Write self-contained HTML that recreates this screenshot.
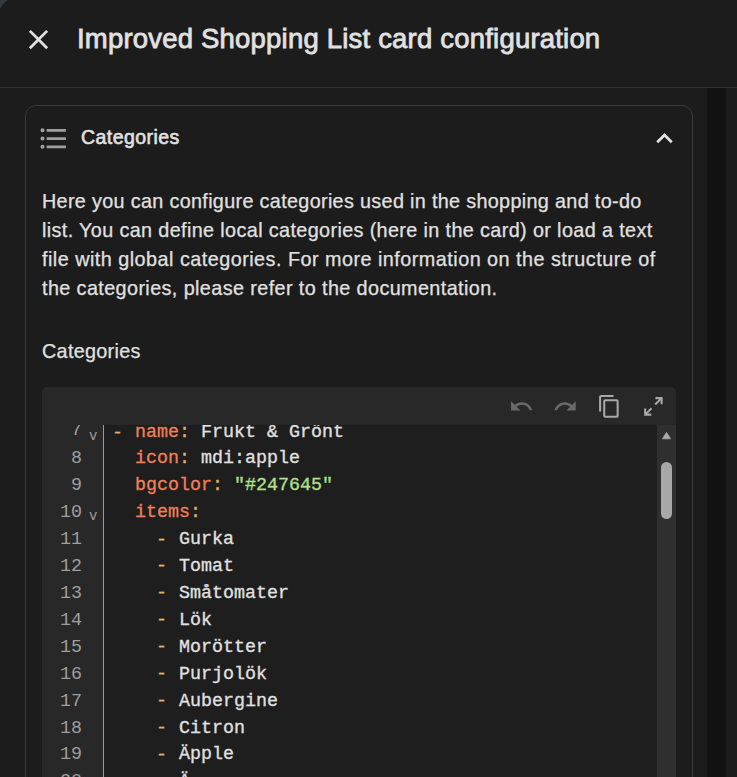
<!DOCTYPE html>
<html><head><meta charset="utf-8">
<style>
html,body{margin:0;padding:0;width:737px;height:777px;overflow:hidden;background:#1c1c1c;}
body{position:relative;font-family:"Liberation Sans",sans-serif;color:#e1e1e1;}
.abs{position:absolute;}
#corner{left:0;top:0;width:40px;height:40px;background:#2e3d46;}
#dlg{left:-4.7px;top:-4.6px;width:800px;height:900px;background:#1c1c1c;border-top-left-radius:28px;}
#hdrline{left:0;top:87px;width:737px;height:1px;background:#343434;}
#track{left:707px;top:88px;width:19px;height:689px;background:#121212;}
#title{left:77px;top:21px;font-size:27.5px;line-height:36px;white-space:nowrap;color:#e1e1e1;-webkit-text-stroke:0.8px #e1e1e1;letter-spacing:0.2px;}
#card{left:25px;top:105px;width:666px;height:800px;border:1px solid #3b3b3b;border-radius:11px;}
#cardtitle{left:81px;top:124.5px;font-size:19.5px;line-height:24px;-webkit-text-stroke:0.6px #e1e1e1;letter-spacing:0.45px;white-space:nowrap;}
#desc{left:42px;top:186.5px;font-size:19.8px;line-height:29px;-webkit-text-stroke:0.25px #e1e1e1;white-space:nowrap;}
#lbl{left:42px;top:339px;font-size:19.8px;line-height:24px;letter-spacing:0.3px;-webkit-text-stroke:0.25px #e1e1e1;white-space:nowrap;}
#editor{left:42px;top:387px;width:634px;height:500px;background:#1e1e1e;border-radius:5px;overflow:hidden;}
#toolbar{left:0;top:0;width:634px;height:38px;background:#282828;}
#gutter{left:0;top:38px;width:61px;height:500px;background:#282828;}
#gline{left:61px;top:38px;width:1px;height:500px;background:#9a9a9a;}
#sbtrack{left:615px;top:38px;width:19px;height:500px;background:#2f2f2f;}
#thumb{left:619px;top:75px;width:11px;height:57px;background:#a8a8a8;border-radius:6px;}
#code{left:0;top:31px;width:615px;height:400px;font-family:"Liberation Mono",monospace;font-size:18.33px;line-height:27px;white-space:pre;}
.tx{-webkit-text-stroke:0.3px currentColor;}
.ln{position:absolute;left:0;width:40px;text-align:right;color:#9e9e9e;}
.fd{position:absolute;left:47px;color:#9e9e9e;font-size:14px;margin-top:4px;}
.tx{position:absolute;left:71px;color:#e1e1e1;}
.k{color:#f0805a;}
.p{color:#e0b070;}
.d{position:relative;top:0.7px;left:-1px;}
.s{color:#b5e08a;}
svg{position:absolute;display:block;}
</style></head><body>
<svg style="left:0;top:0" width="40" height="40" viewBox="0 0 40 40"><rect width="40" height="40" fill="#2d3c45"/><path fill="#1c1c1c" d="M0,8.6A28,28 0 0 1 7.4,0H40V40H0Z"/></svg>
<div class="abs" id="hdrline"></div>
<div class="abs" id="track"></div>
<svg style="left:22px;top:23px" width="33" height="33" viewBox="0 0 24 24"><path fill="#e1e1e1" d="M19,6.41L17.59,5L12,10.59L6.41,5L5,6.41L10.59,12L5,17.59L6.41,19L12,13.41L17.59,19L19,17.59L13.41,12L19,6.41Z"/></svg>
<div class="abs" id="title">Improved Shopping List card configuration</div>
<div class="abs" id="card"></div>
<svg style="left:37px;top:122px" width="33" height="33" viewBox="0 0 24 24"><path fill="#9e9e9e" d="M7,5H21V7H7V5M7,13V11H21V13H7M4,4.5A1.5,1.5 0 0,1 5.5,6A1.5,1.5 0 0,1 4,7.5A1.5,1.5 0 0,1 2.5,6A1.5,1.5 0 0,1 4,4.5M4,10.5A1.5,1.5 0 0,1 5.5,12A1.5,1.5 0 0,1 4,13.5A1.5,1.5 0 0,1 2.5,12A1.5,1.5 0 0,1 4,10.5M7,19V17H21V19H7M4,16.5A1.5,1.5 0 0,1 5.5,18A1.5,1.5 0 0,1 4,19.5A1.5,1.5 0 0,1 2.5,18A1.5,1.5 0 0,1 4,16.5Z"/></svg>
<div class="abs" id="cardtitle">Categories</div>
<svg style="left:648px;top:122px" width="33" height="33" viewBox="0 0 24 24"><path fill="#e1e1e1" d="M7.41,15.41L12,10.83L16.59,15.41L18,14L12,8L6,14L7.41,15.41Z"/></svg>
<div class="abs" id="desc"><span style="letter-spacing:0.33px">Here you can configure categories used in the shopping and to-do</span><br><span style="letter-spacing:0.375px">list. You can define local categories (here in the card) or load a text</span><br><span style="letter-spacing:0.48px">file with global categories. For more information on the structure of</span><br><span style="letter-spacing:0.4px">the categories, please refer to the documentation.</span></div>
<div class="abs" id="lbl">Categories</div>
<div class="abs" id="editor">
  <div class="abs" id="gutter"></div>
  <div class="abs" id="sbtrack"></div>
  <div class="abs" id="code">
<div class="ln" style="top:-0.9px">7</div><div class="fd" style="top:1.05px">v</div><div class="tx" style="top:1.05px"><span class="p d">-</span> <span class="k">name</span><span class="p">:</span> Frukt &amp; Grönt</div>
<div class="ln" style="top:27.0px">8</div><div class="tx" style="top:27.0px">  <span class="k">icon</span><span class="p">:</span> mdi:apple</div>
<div class="ln" style="top:53.95px">9</div><div class="tx" style="top:53.95px">  <span class="k">bgcolor</span><span class="p">:</span> <span class="s">"#247645"</span></div>
<div class="ln" style="top:80.9px">10</div><div class="fd" style="top:80.9px">v</div><div class="tx" style="top:80.9px">  <span class="k">items</span><span class="p">:</span></div>
<div class="ln" style="top:107.85px">11</div><div class="tx" style="top:107.85px">    <span class="p d">-</span> Gurka</div>
<div class="ln" style="top:134.8px">12</div><div class="tx" style="top:134.8px">    <span class="p d">-</span> Tomat</div>
<div class="ln" style="top:161.75px">13</div><div class="tx" style="top:161.75px">    <span class="p d">-</span> Småtomater</div>
<div class="ln" style="top:188.7px">14</div><div class="tx" style="top:188.7px">    <span class="p d">-</span> Lök</div>
<div class="ln" style="top:215.65px">15</div><div class="tx" style="top:215.65px">    <span class="p d">-</span> Morötter</div>
<div class="ln" style="top:242.6px">16</div><div class="tx" style="top:242.6px">    <span class="p d">-</span> Purjolök</div>
<div class="ln" style="top:269.55px">17</div><div class="tx" style="top:269.55px">    <span class="p d">-</span> Aubergine</div>
<div class="ln" style="top:296.5px">18</div><div class="tx" style="top:296.5px">    <span class="p d">-</span> Citron</div>
<div class="ln" style="top:323.45px">19</div><div class="tx" style="top:323.45px">    <span class="p d">-</span> Äpple</div>
<div class="ln" style="top:350.4px">20</div><div class="tx" style="top:350.4px">    <span class="p d">-</span> Ä</div>
  </div>
  <div class="abs" id="toolbar"></div>
  <div class="abs" id="gline"></div>
  <div class="abs" id="thumb"></div>
  <svg style="left:619px;top:45.3px" width="11" height="8" viewBox="0 0 11 8"><path fill="#a8a8a8" stroke="#a8a8a8" stroke-width="0.8" stroke-linejoin="round" d="M5.5,0.4L9.6,6.8H1.4Z"/></svg>
  <svg style="left:466.6px;top:7.3px" width="24.75" height="24.75" viewBox="0 0 24 24"><path fill="#6a6a6a" d="M12.5,8C9.85,8 7.45,9 5.6,10.6L2,7V16H11L7.38,12.38C8.77,11.22 10.54,10.5 12.5,10.5C16.04,10.5 19.05,12.81 20.1,16L22.47,15.22C21.08,11.03 17.15,8 12.5,8Z"/></svg>
  <svg style="left:511.1px;top:7.3px" width="24.75" height="24.75" viewBox="0 0 24 24"><path fill="#6a6a6a" d="M18.4,10.6C16.550,9 14.150,8 11.500,8C6.850,8 2.920,11.030 1.540,15.220L3.900,16C4.950,12.810 7.950,10.500 11.500,10.500C13.450,10.500 15.230,11.220 16.620,12.380L13,16H22V7L18.400,10.600Z"/></svg>
  <svg style="left:554.8px;top:7.1px" width="24.75" height="24.75" viewBox="0 0 24 24"><path fill="#a8a8a8" d="M19,21H8V7H19M19,5H8A2,2 0 0,0 6,7V21A2,2 0 0,0 8,23H19A2,2 0 0,0 21,21V7A2,2 0 0,0 19,5M16,1H4A2,2 0 0,0 2,3V17H4V3H16V1Z"/></svg>
  <svg style="left:598.9px;top:6.8px" width="24.75" height="24.75" viewBox="0 0 24 24"><path fill="#a8a8a8" d="M10,21V19H6.41L10.910,14.500L9.500,13.090L5,17.590V14H3V21H10M14.500,10.910L19,6.410V10H21V3H14V5H17.590L13.090,9.500L14.500,10.910Z"/></svg>
</div>
</body></html>
